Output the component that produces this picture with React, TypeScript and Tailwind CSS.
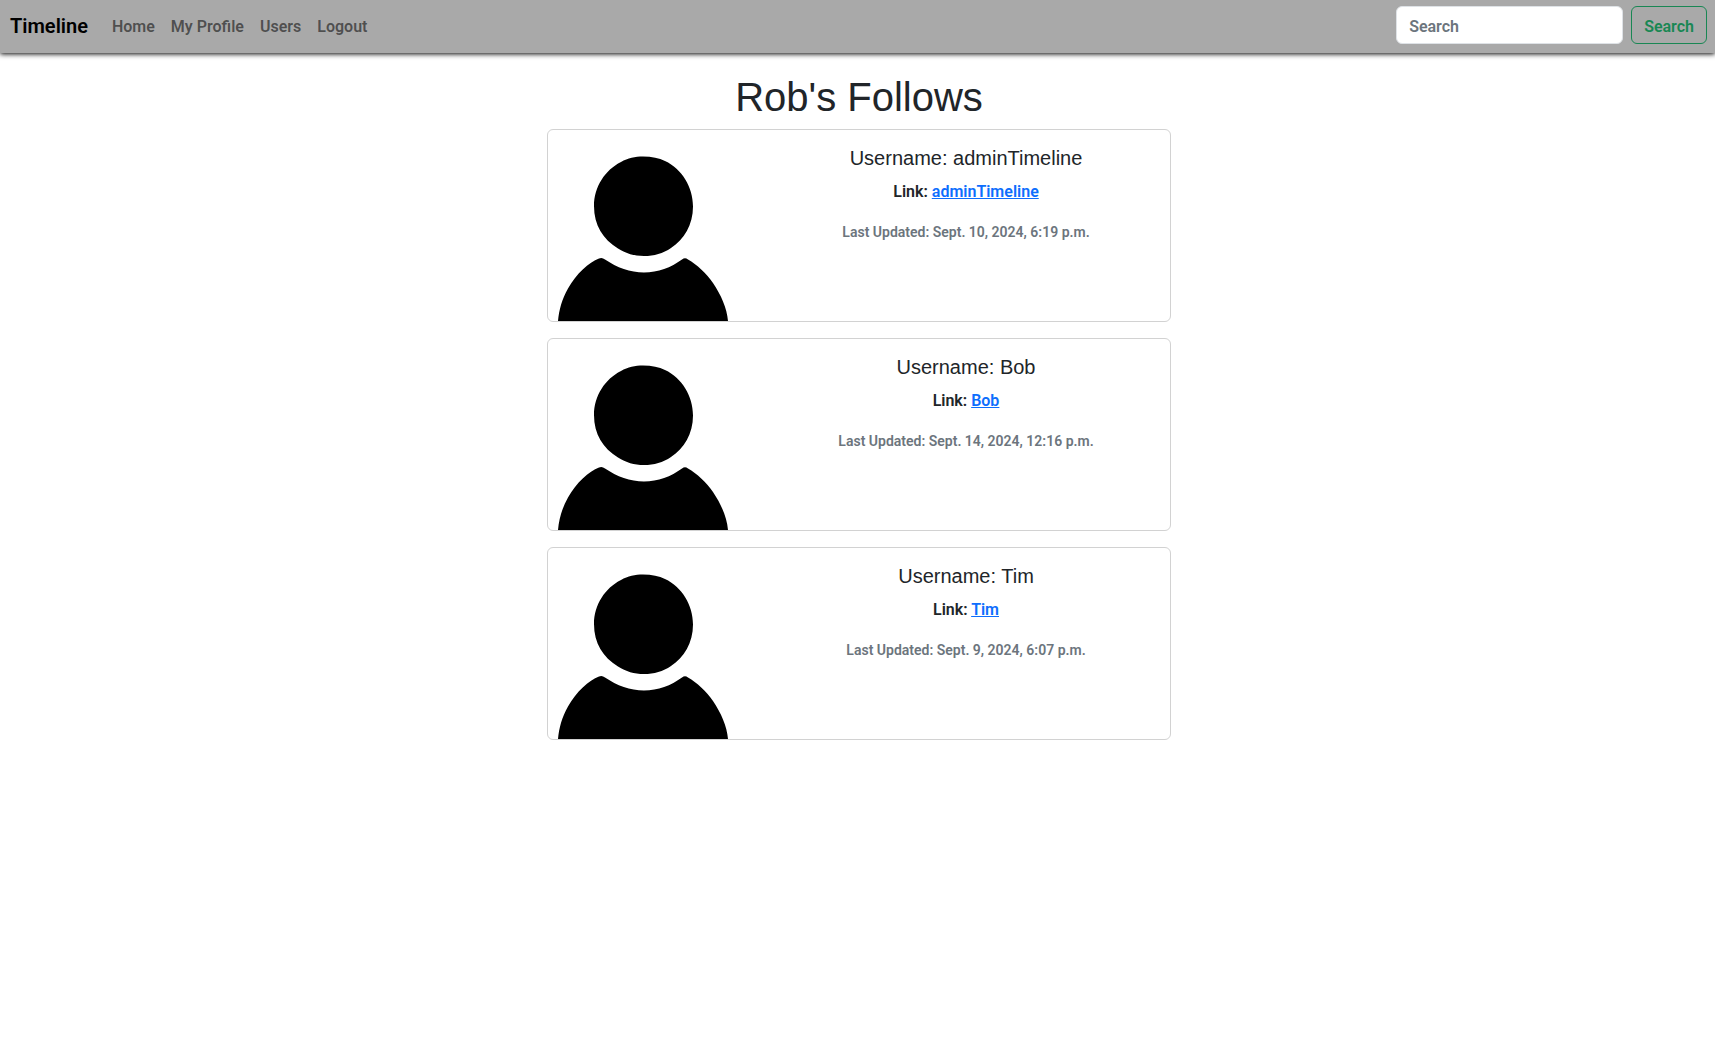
const follows = [
  { name: "adminTimeline", updated: "Sept. 10, 2024, 6:19 p.m." },
  { name: "Bob", updated: "Sept. 14, 2024, 12:16 p.m." },
  { name: "Tim", updated: "Sept. 9, 2024, 6:07 p.m." },
];

const links = ["Home", "My Profile", "Users", "Logout"];

function Avatar() {
  return (
    <svg viewBox="0 0 191 191" className="block h-[191px] w-[191px]" role="img" aria-label="Profile picture">
      <path d="M95 26.5C104 26.5 111 28 117 31C134 39 145 57 145 76.500C145 95 136 109.500 123 118C115 123.500 106 126 96 126C86 126 78 123.500 70 118.500C55 109.500 46 95 46 76C46 57 57 40 73 32C80 28 87 26.500 95 26.500Z" />
      <path d="M10 191C11 180 14 169 20 158.500C28 144 41 132 51 128.500Q54 127 57 129.500C69 137.500 82 142.500 96 142.500C110 142.500 123 137.500 134 129.500Q137 127 140 129.500C149 134.500 158 143 165 153C173 165 179 178 180 191Z" />
    </svg>
  );
}

export default function App() {
  return (
    <div className="min-h-screen bg-white font-[Roboto,sans-serif] text-base leading-[26px] font-semibold text-[#212529]">
      <nav className="flex items-start bg-[#a9a9a9] pt-1.5 pr-2 pb-[5px] pl-2.5 shadow-[0_1px_5px_#000]">
        <a href="#" className="mr-4 py-[5px] text-xl leading-[30px] text-black">Timeline</a>
        <ul className="flex flex-1">
          {links.map((label) => (
            <li key={label}>
              <a href="#" className="block p-2 text-black/55">{label}</a>
            </li>
          ))}
        </ul>
        <form className="flex gap-2" onSubmit={(e) => e.preventDefault()}>
          <input
            type="search"
            aria-label="Search"
            placeholder="Search"
            className="h-[38px] w-[227px] rounded-md border border-[#dee2e6] bg-white px-3 pt-0.5 placeholder:text-[#6c757d] placeholder:opacity-100"
          />
          <button type="submit" className="h-[38px] rounded-md border border-[#198754] px-3 pt-1 text-[#198754]">Search</button>
        </form>
      </nav>
      <main className="mx-auto max-w-[627px] pt-5 pl-[3px] text-center">
        <h1 className="mb-2 font-['Liberation_Sans',sans-serif] text-[40px] leading-12 font-medium">Rob's Follows</h1>
        <div className="flex flex-col gap-4">
          {follows.map((f) => (
            <article key={f.name} className="grid grid-cols-[214px_1fr] overflow-hidden rounded-md border border-[#d2d2d2]">
              <Avatar />
              <div className="py-4">
                <h5 className="mb-2 font-['Liberation_Sans',sans-serif] text-xl leading-6 font-medium">Username: {f.name}</h5>
                <p className="mb-3.5 leading-7">
                  Link: <a href="#" className="text-[#0d6efd] underline">{f.name}</a>
                </p>
                <p className="text-sm leading-6 text-[#6c757d]">Last Updated: {f.updated}</p>
              </div>
            </article>
          ))}
        </div>
      </main>
    </div>
  );
}
